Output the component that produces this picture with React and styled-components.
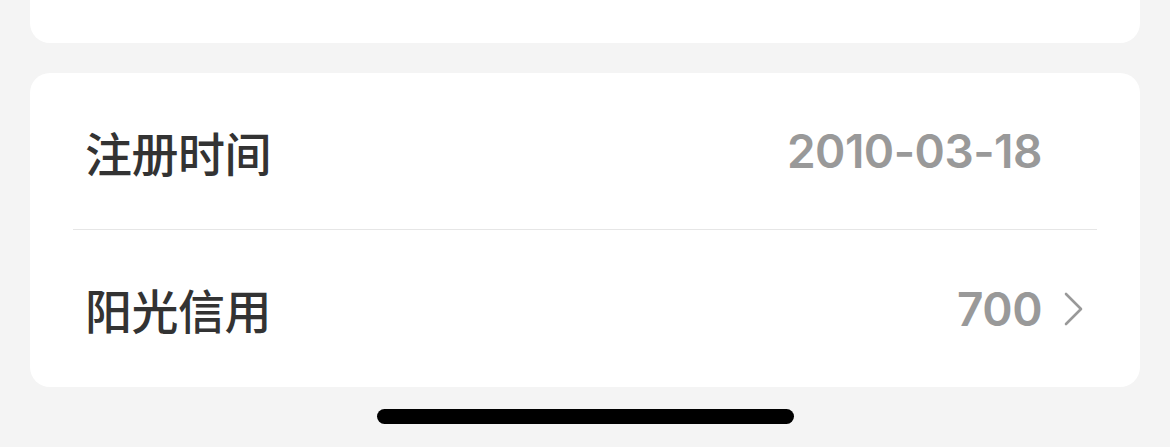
import styled, { createGlobalStyle } from "styled-components";

const GlobalStyle = createGlobalStyle`
  html, body {
    margin: 0;
    padding: 0;
    background: #f4f4f4;
  }
  body {
    font-family: Inter, "Noto Sans CJK SC", sans-serif;
  }
`;

const Page = styled.div`
  width: 1170px;
  height: 447px;
  background: #f4f4f4;
  padding: 0 30px;
  box-sizing: border-box;
  display: flex;
  flex-direction: column;
  gap: 30px;
  overflow: hidden;
`;

const TopCard = styled.div`
  height: 43px;
  background: #fff;
  border-radius: 0 0 20px 20px;
  flex-shrink: 0;
`;

const Card = styled.div`
  background: #fff;
  border-radius: 20px;
  padding: 0 43px;
  display: flex;
  flex-direction: column;
  flex-shrink: 0;
`;

const Row = styled.div`
  height: ${(p) => p.$h}px;
  display: flex;
  align-items: center;
  justify-content: space-between;
  border-bottom: ${(p) => (p.$divider ? "1px solid #e6e6e6" : "none")};
  padding: 0 12px 0 12px;
`;

const Label = styled.span`
  font-family: "Noto Sans CJK SC", sans-serif;
  font-size: 47px;
  font-weight: 500;
  color: #333;
  letter-spacing: -0.5px;
`;

const Right = styled.div`
  display: flex;
  align-items: center;
  gap: 21px;
`;

const Value = styled.span`
  font-family: Inter, "Noto Sans", sans-serif;
  font-size: 46px;
  font-weight: 600;
  color: #999;
  letter-spacing: -0.5px;
`;

const Chevron = styled.svg`
  width: 22px;
  height: 34px;
  visibility: ${(p) => (p.$hidden ? "hidden" : "visible")};
`;

const HomeArea = styled.div`
  flex: 1;
  display: flex;
  justify-content: center;
  margin-top: -8px;
`;

const HomeBar = styled.div`
  width: 417px;
  height: 15px;
  background: #000;
  border-radius: 8px;
`;

const Arrow = ({ hidden }) => (
  <Chevron $hidden={hidden} viewBox="0 0 22 34" fill="none">
    <path d="M3 2 L18 17 L3 32" stroke="#999" strokeWidth="2.6" strokeLinecap="round" strokeLinejoin="round" />
  </Chevron>
);

export default function App() {
  return (
    <>
      <GlobalStyle />
      <Page>
        <TopCard />
        <Card>
          <Row $h={156} $divider>
            <Label>注册时间</Label>
            <Right>
              <Value>2010-03-18</Value>
              <Arrow hidden />
            </Right>
          </Row>
          <Row $h={157}>
            <Label>阳光信用</Label>
            <Right>
              <Value>700</Value>
              <Arrow />
            </Right>
          </Row>
        </Card>
        <HomeArea>
          <HomeBar />
        </HomeArea>
      </Page>
    </>
  );
}
